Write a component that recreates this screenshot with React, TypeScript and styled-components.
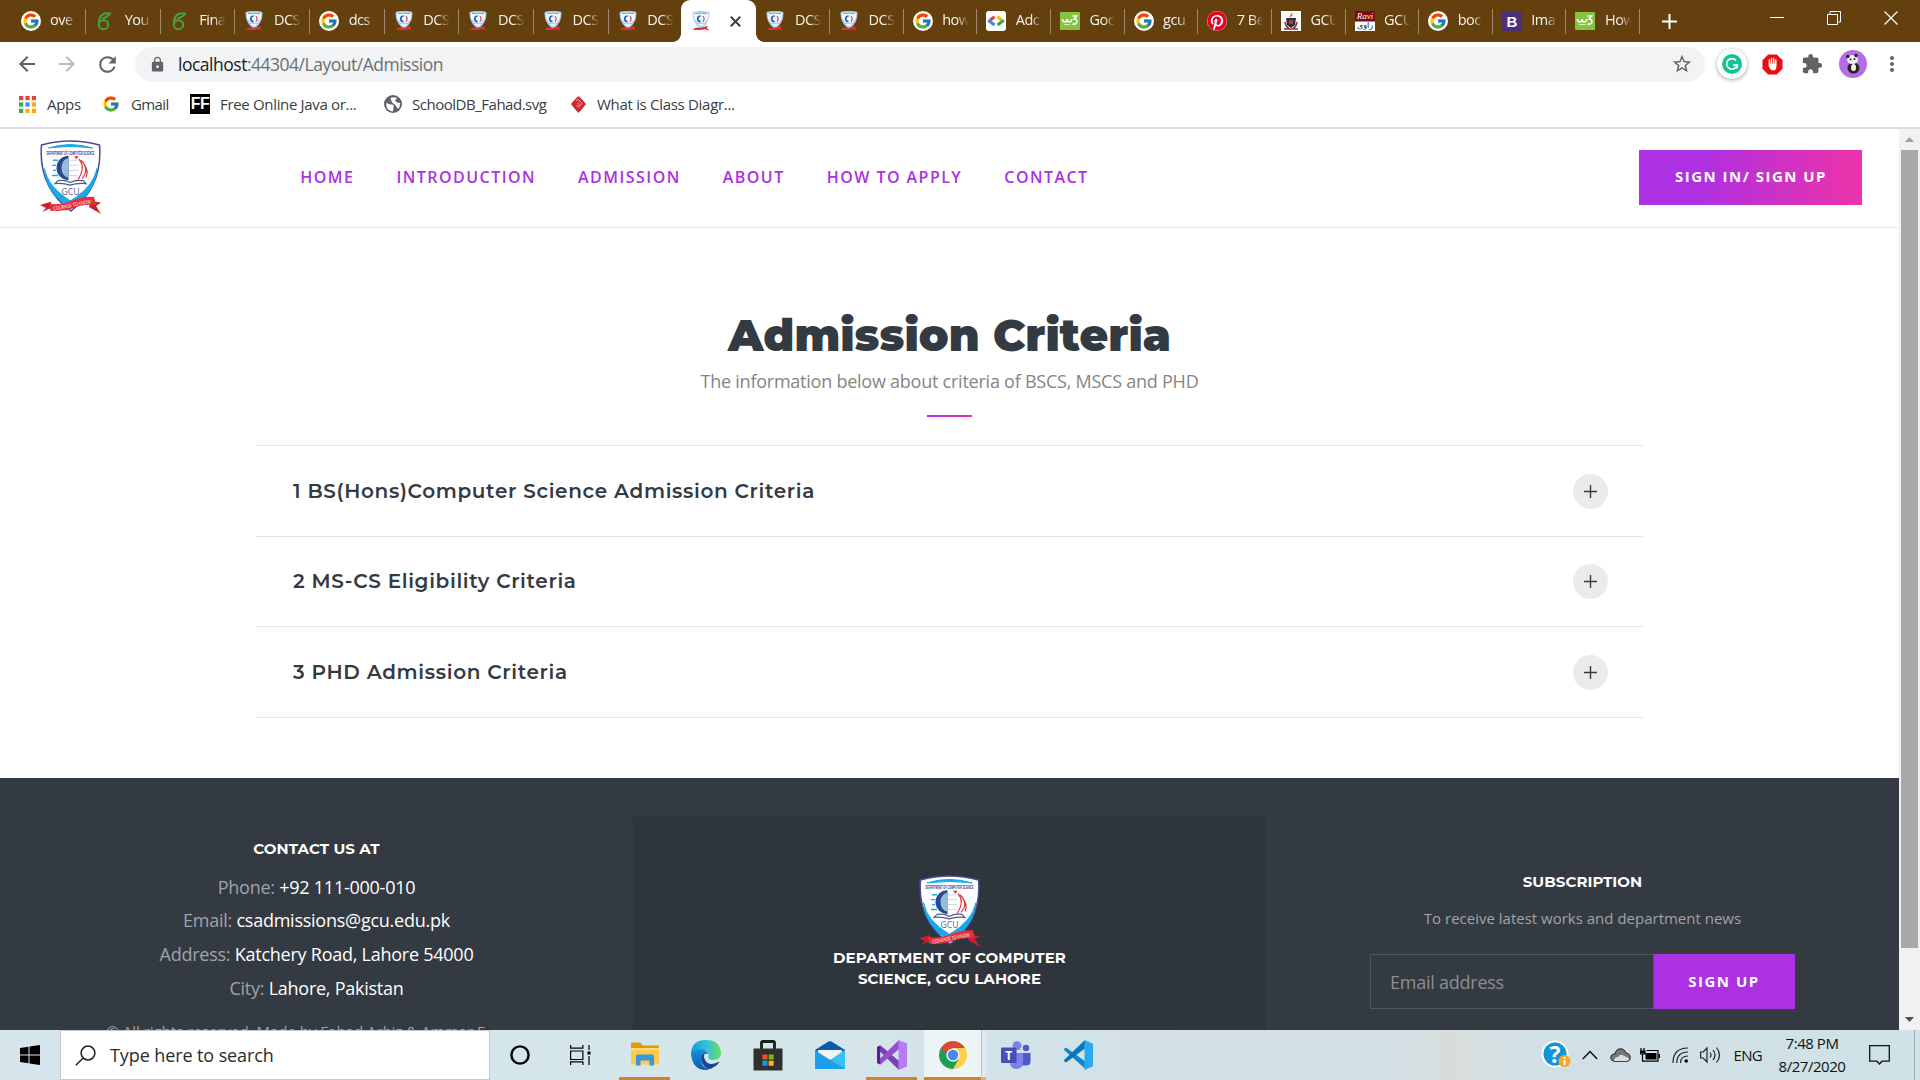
import React from "react";
import styled, { createGlobalStyle, css } from "styled-components";
import { FcGoogle } from "react-icons/fc";
import { FaPinterest } from "react-icons/fa";
import {
  MdArrowBack,
  MdArrowForward,
  MdExtension,
  MdLock,
  MdMoreVert,
  MdRefresh,
  MdStarBorder,
} from "react-icons/md";

const body = `"Open Sans", "Noto Sans", sans-serif`;
const display = `Montserrat, Inter, sans-serif`;

const GlobalStyle = createGlobalStyle`
  * { box-sizing: border-box; }
  body { margin: 0; overflow: hidden; background: #fff; font-family: ${body}; }
  svg { display: block; flex: none; }
  h1, h2, p { margin: 0; }
`;

const Screen = styled.div`
  width: 1920px;
  height: 1080px;
  display: flex;
  flex-direction: column;
  overflow: hidden;
`;

/* ---------- browser chrome ---------- */

const TabStrip = styled.div`
  flex: none;
  height: 42px;
  padding-left: 11.5px;
  display: flex;
  background: #64400f;
`;

const TabItem = styled.div<{ $w: number; $divider: boolean }>`
  width: ${(p) => p.$w}px;
  flex: none;
  height: 42px;
  display: flex;
  align-items: center;
  padding-left: 9px;
  background: linear-gradient(#a08a6b, #a08a6b) right 9px / 1px 25px no-repeat;
  ${(p) => !p.$divider && css`background: none;`}
`;

const ActiveTab = styled.div`
  width: 75.5px;
  flex: none;
  height: 42px;
  margin-left: -2.5px;
  display: flex;
  align-items: center;
  justify-content: space-between;
  padding: 0 15px 0 10px;
  position: relative;
  background: #fff;
  border-radius: 9px 9px 0 0;
  &::before,
  &::after {
    content: "";
    position: absolute;
    bottom: 0;
    width: 8px;
    height: 8px;
  }
  &::before {
    left: -8px;
    background: radial-gradient(circle at 0 0, transparent 7.5px, #fff 8px);
  }
  &::after {
    right: -8px;
    background: radial-gradient(circle at 100% 0, transparent 7.5px, #fff 8px);
  }
`;

const Favicon = styled.span`
  width: 20px;
  height: 20px;
  flex: none;
  display: flex;
  align-items: center;
  justify-content: center;
`;

const TabTitle = styled.span`
  width: 27px;
  margin: 0 0 2px 9.5px;
  overflow: hidden;
  white-space: nowrap;
  font-size: 14.5px;
  line-height: 22px;
  letter-spacing: -0.5px;
  color: #f8f2ea;
  mask-image: linear-gradient(90deg, #000 55%, transparent 98%);
`;

const WhiteDisc = styled.span`
  width: 20px;
  height: 20px;
  border-radius: 50%;
  background: #fff;
  display: flex;
  align-items: center;
  justify-content: center;
`;

const NewTab = styled.div`
  width: 58px;
  display: flex;
  align-items: center;
  justify-content: center;
`;

const WindowButtons = styled.div`
  margin-left: auto;
  margin-right: 1px;
  height: 36px;
  display: flex;
  align-items: center;
`;

const WindowButton = styled.div`
  width: 57px;
  display: flex;
  justify-content: center;
`;

const Toolbar = styled.div`
  flex: none;
  height: 45px;
  display: flex;
  align-items: center;
  padding: 0 0 1px 15px;
  color: #5f6368;
`;

const NavButtons = styled.div`
  width: 120px;
  display: flex;
  gap: 16px;
`;

const AddressBar = styled.div`
  width: 1570px;
  height: 35px;
  border-radius: 18px;
  background: #f1f3f4;
  display: flex;
  align-items: center;
  padding: 0 12px 0 14px;
`;

const Url = styled.span`
  flex: 1;
  margin-left: 12px;
  font-size: 17.5px;
  letter-spacing: -0.49px;
  line-height: 24px;
  color: #6b6f73;
  b {
    font-weight: 400;
    color: #202124;
  }
`;

const Extensions = styled.div`
  flex: 1;
  display: flex;
  align-items: center;
  padding-left: 12px;
`;

const GrammarlyDisc = styled.span`
  width: 30px;
  height: 30px;
  border-radius: 50%;
  background: #fff;
  box-shadow: 0 1px 4px rgba(0, 0, 0, 0.35);
  display: flex;
  align-items: center;
  justify-content: center;
  margin-right: 15px;
`;

const Slot = styled.span<{ $w: number }>`
  width: ${(p) => p.$w}px;
  display: flex;
  justify-content: center;
`;

const Bookmarks = styled.div`
  flex: none;
  height: 42px;
  border-bottom: 2px solid #dadce0;
  padding: 0 0 7px 19px;
  display: flex;
  align-items: center;
`;

const Bookmark = styled.div<{ $gap: number; $w: number; $ls?: number }>`
  width: ${(p) => p.$w}px;
  display: flex;
  align-items: center;
  gap: ${(p) => p.$gap}px;
  white-space: nowrap;
  font-size: 15px;
  letter-spacing: ${(p) => p.$ls ?? -0.4}px;
  line-height: 20px;
  color: #3a3d41;
  svg {
    margin-top: 1px;
  }
`;

const FFBadge = styled.span`
  width: 20px;
  height: 20px;
  background: #000;
  color: #fff;
  font: 700 16px/20px "Liberation Sans", sans-serif;
  letter-spacing: -0.6px;
  text-align: center;
`;

/* ---------- page ---------- */

const Viewport = styled.div`
  height: 901px;
  flex: none;
  display: flex;
  overflow: hidden;
`;

const Page = styled.main`
  width: 1899px;
  overflow: hidden;
`;

const Scrollbar = styled.div`
  width: 21px;
  background: #f1f1f1;
  display: flex;
  flex-direction: column;
  align-items: center;
  padding-right: 1px;
`;

const ScrollArrow = styled.div`
  height: 21px;
  display: flex;
  align-items: center;
`;

const ScrollThumb = styled.div`
  width: 17px;
  height: 798px;
  margin-bottom: 61px;
  background: #a8a8a8;
`;

const Header = styled.header`
  height: 99px;
  border-bottom: 1px solid #e5e5e5;
  display: flex;
  align-items: center;
  padding: 0 37px 2px 40px;
`;

const HeaderNav = styled.nav`
  flex: 1;
  display: flex;
  gap: 42px;
  margin-left: 199.3px;
`;

const NavLink = styled.a`
  font-size: 16px;
  font-weight: 600;
  letter-spacing: 1.46px;
  line-height: 24px;
  color: #ad30e3;
`;

const SignIn = styled.button`
  width: 223px;
  height: 55px;
  border: 0;
  padding: 0 0 2px 1px;
  background: linear-gradient(90deg, #ad30e3 25%, #e932ab 95%);
  color: #fff;
  font: 700 15px ${body};
  letter-spacing: 1.48px;
`;

const Intro = styled.section`
  height: 217px;
  display: flex;
  flex-direction: column;
  align-items: center;
  padding-top: 80px;
`;

const Title = styled.h1`
  font: 900 44px/54px ${display};
  letter-spacing: 0.05px;
  color: #343a42;
`;

const Lead = styled.p`
  margin-top: 5px;
  font-size: 18px;
  line-height: 28px;
  letter-spacing: -0.24px;
  color: #858585;
`;

const Accent = styled.div`
  width: 45px;
  height: 2px;
  margin-top: 20px;
  background: linear-gradient(90deg, #ad30e3, #e932ab);
`;

const Accordion = styled.section`
  width: 1387px;
  margin-left: 256px;
  border-top: 1px solid #e5e5e5;
`;

const AccordionRow = styled.div`
  height: 90.7px;
  border-bottom: 1px solid #e5e5e5;
  display: flex;
  align-items: center;
  justify-content: space-between;
  padding: 0.5px 35px 0 37px;
`;

const AccordionTitle = styled.h2`
  margin-bottom: 0.8px;
  font: 600 20px/28px ${display};
  letter-spacing: 0.66px;
  color: #343a42;
`;

const PlusDisc = styled.span`
  width: 35px;
  height: 35px;
  border-radius: 50%;
  background: #ebebeb;
  display: flex;
  align-items: center;
  justify-content: center;
`;

const Footer = styled.footer`
  height: 260px;
  margin-top: 60px;
  padding-top: 39px;
  background: #343a42;
  display: grid;
  grid-template-columns: repeat(3, 633px);
`;

const FooterColumn = styled.div<{ $top: number; $dark?: boolean }>`
  height: 330px;
  padding-top: ${(p) => p.$top}px;
  background: ${(p) => (p.$dark ? "#2f353c" : "transparent")};
  display: flex;
  flex-direction: column;
  align-items: center;
`;

const FooterHeading = styled.h2`
  font: 700 15px/21px ${display};
  letter-spacing: 0.08px;
  color: #fff;
  text-align: center;
`;

const ContactList = styled.div`
  margin-top: 11.5px;
`;

const ContactLine = styled.p`
  font-size: 18px;
  line-height: 33.75px;
  letter-spacing: -0.25px;
  text-align: center;
  color: #a0a3a7;
  span {
    color: #fff;
  }
`;

const Copyright = styled.p`
  margin: 13px 42px 0 0;
  font-size: 15px;
  line-height: 24px;
  color: #a0a3a7;
  white-space: nowrap;
`;

const Note = styled.p`
  margin: 14px 0 24px;
  font-size: 15px;
  line-height: 24px;
  color: #a0a3a7;
`;

const SubscribeForm = styled.div`
  display: flex;
  height: 55px;
`;

const EmailField = styled.div`
  width: 284px;
  border: 1px solid #50565d;
  padding: 1px 0 0 19px;
  font-size: 18px;
  line-height: 53px;
  letter-spacing: -0.24px;
  color: #8b8e91;
`;

const SubscribeButton = styled.button`
  width: 141px;
  border: 0;
  padding: 0 1px 2px 0;
  background: #ad30e3;
  color: #fff;
  font: 700 15px ${body};
  letter-spacing: 1.5px;
`;

/* ---------- taskbar ---------- */

const Taskbar = styled.div`
  flex: none;
  height: 50px;
  display: flex;
  background: linear-gradient(
    90deg,
    #d6e5ec 0,
    #d5e7ea 700px,
    #d3e0e8 1160px,
    #d3dfe6 1390px,
    #d7dddb 1450px,
    #d2e0e6 1520px,
    #cfe2e7 1920px
  );
`;

const StartButton = styled.div`
  width: 60px;
  display: flex;
  align-items: center;
  justify-content: center;
`;

const SearchBox = styled.div`
  width: 430px;
  height: 50px;
  background: #fff;
  border: 1px solid #c6c9cb;
  display: flex;
  align-items: center;
  padding-left: 14px;
  gap: 14px;
  font-size: 18px;
  letter-spacing: -0.1px;
  color: #2b2b2b;
`;

const TaskButton = styled.div<{ $w: number; $running?: boolean; $active?: boolean }>`
  width: ${(p) => p.$w}px;
  height: 50px;
  display: flex;
  align-items: center;
  justify-content: center;
  background: ${(p) => (p.$active ? "#edf4f6" : "transparent")};
  border-bottom: 3px solid ${(p) => (p.$running || p.$active ? "#cb862d" : "transparent")};
  border-top: 3px solid transparent;
`;

const ActiveEdge = styled.div`
  width: 5px;
  height: 50px;
  background: #deeaed;
  border-left: 1px solid #b5c4ca;
  border-bottom: 3px solid #dfae73;
`;

const Spacer = styled.div<{ $w: number }>`
  width: ${(p) => p.$w}px;
`;

const Tray = styled.div`
  margin-left: auto;
  display: flex;
  align-items: center;
`;

const TrayText = styled.span`
  width: 34px;
  text-align: right;
  font-size: 15px;
  letter-spacing: -0.7px;
  color: #111;
`;

const Clock = styled.div`
  width: 100px;
  text-align: center;
  font-size: 15px;
  line-height: 23px;
  letter-spacing: -0.45px;
  color: #111;
`;

const ShowDesktop = styled.div`
  width: 6px;
  height: 50px;
  border-left: 1px solid #9fb0b8;
`;

/* ---------- drawings ---------- */

const Crest = ({ w, h }: { w: number; h: number }) => (
  <svg width={w} height={h} viewBox="0 0 61 73" preserveAspectRatio="none">
    <path d="M1.500 5Q30-3 59.500 5Q63 46 31 70Q-2 46 1.500 5Z" fill="#fff" stroke="#4b4a98" strokeWidth="1.500" />
    <path d="M8 8Q30 1 53 8Q30 5 8 8Z" fill="#18a9e8" stroke="#18a9e8" />
    <path d="M4.500 28Q8 47 30.500 60Q53 47 57 28Q55 52 31 67Q6 52 4.500 28Z" fill="#18a9e8" stroke="#18a9e8" strokeWidth="1" />
    <text x="30.5" y="14.500" textAnchor="middle" textLength="48" lengthAdjust="spacingAndGlyphs" fontSize="5.500" fontWeight="700" fontFamily="Liberation Sans, sans-serif" fill="#3e3c8c">
      DEPARTMENT OF COMPUTER SCIENCE
    </text>
    <path d="M28.500 15.500A12 12 0 0 0 28.500 39.500Z" fill="#27498f" />
    <path d="M28.500 18A7 9.500 0 0 0 28.500 37Z" fill="#9bb9d8" />
    <path d="M29 20h8M29 25h9M29 30h9M29 35h8" stroke="#c8dbea" strokeWidth="1" fill="none" />
    <path d="M13 20h5M12 25h4M13 30h3M12 35h6" stroke="#22a7e5" strokeWidth="1.400" />
    <path d="M34 16h4.500l-2 3Z" fill="#e22c36" />
    <path d="M39 19Q46 27 38 39M41 20Q50 29 42 38M44 24Q49 30 46 37" stroke="#e3343d" strokeWidth="1.200" fill="none" />
    <path d="M15 43l3-3q8-1 12 2q6-3 13-2l3 3q-9-1-16 1.500q-7-2.500-15-1.500Z" fill="#fff" stroke="#4a5b92" strokeWidth="1.200" />
    <text x="30.5" y="54" textAnchor="middle" fontSize="9" textLength="18" lengthAdjust="spacingAndGlyphs" fontFamily="Open Sans, sans-serif" fill="#5b5c80">
      GCU
    </text>
    <path d="M0 64l11-3v6l-9 4 4-4ZM51 60l10 2-5 3 5 8-12-7Z" fill="#c9202b" />
    <path d="M9 62.500q8 2.500 20-1.500q13-5.500 25-5l2 8q-13-1-22 3q-12 4.500-24 2.500Z" fill="#e62f39" />
    <text x="32" y="66" transform="rotate(-11 32 64)" textAnchor="middle" fontSize="5.200" fontFamily="Open Sans, sans-serif" fill="#fff" textLength="38" lengthAdjust="spacingAndGlyphs">
      COURAGE TO KNOW
    </text>
  </svg>
);

const CrestIcon = () => (
  <svg width="20" height="20" viewBox="0 0 20 20">
    <path d="M2 1.300Q10-.6 18 1.300Q18.500 12 10 17.500Q1.500 12 2 1.300Z" fill="#eef7fd" stroke="#a9c8e8" strokeWidth="1" />
    <path d="M4 2.500q6-1 12 0" stroke="#35a8e0" fill="none" />
    <path d="M9.500 5a2.800 2.800 0 1 0 0 5.600" fill="none" stroke="#2b5ca6" strokeWidth="1.700" />
    <path d="M12 5q2.200 2.800 0 5.600" stroke="#e2444d" strokeWidth="1.200" fill="none" />
    <path d="M6 12.300h8M4 9q2 5 6 7.300q4-2.300 6-7.300" stroke="#8fd0f0" fill="none" />
    <path d="M1.500 18.500l3.500-2q6 .8 11.500-1.800l-.5 2.500 2.500 2.600-4-1.500q-5 1.500-13 .2Z" fill="#e2303a" />
  </svg>
);

const GoogleIcon = () => (
  <WhiteDisc>
    <FcGoogle size={18} />
  </WhiteDisc>
);

const OverleafIcon = () => (
  <svg width="20" height="20" viewBox="0 0 20 20" fill="none" stroke="#47a141" strokeWidth="2">
    <ellipse cx="8.500" cy="13.700" rx="4.700" ry="4.500" />
    <path d="M3.900 13.500Q3.500 5.500 8.500 3Q11 1.800 15 2.500Q13 6 7.500 7.500" />
  </svg>
);

const DevIcon = () => (
  <svg width="20" height="20" viewBox="0 0 20 20">
    <rect width="20" height="20" rx="3" fill="#fff" />
    <g fill="none" strokeWidth="3">
      <path d="M8.500 5.800L4 9.300" stroke="#ea4335" />
      <path d="M2.200 9.200L8.500 14" stroke="#4285f4" />
      <path d="M11.500 5.800L16 9.300" stroke="#fbbc04" />
      <path d="M17.800 9.200L11.500 14" stroke="#34a853" />
    </g>
  </svg>
);

const W3Icon = () => (
  <svg width="20" height="18" viewBox="0 0 20 18">
    <rect width="20" height="18" rx="1" fill="#86c440" />
    <path d="M2.500 7q0 3 2.300 3t2.300-3q0 3 2.300 3q2 0 2.300-3M12.500 4h4l-2.300 3q2.800 0 2.700 2.800q-.5 3-4.400 2.200" stroke="#fff" strokeWidth="1.600" fill="none" />
    <path d="M4 12.500h6.500" stroke="#d6efb6" strokeWidth="1" />
  </svg>
);

const UniversityIcon = () => (
  <svg width="20" height="20" viewBox="0 0 20 20">
    <rect width="20" height="20" fill="#fff" />
    <path d="M5 7h10l-1 7-4 3-4-3Z" fill="#2c2c52" />
    <path d="M10 1q3 2 .500 4t0 3q-3-2-1-4t.500-3Z" fill="#c26a1e" />
    <path d="M8 9h4v4H8Z" fill="#a9442a" />
    <path d="M4 11q1 5 4 6.500M16 11q-1 5-4 6.500M3 18h14" stroke="#8b3b27" strokeWidth="1.600" fill="none" />
  </svg>
);

const RaviIcon = () => (
  <svg width="20" height="20" viewBox="0 0 20 20">
    <rect width="20" height="20" fill="#fff" />
    <rect width="20" height="10.500" fill="#7c0a10" />
    <text x="10" y="8" textAnchor="middle" fontSize="9" fontStyle="italic" fontFamily="Liberation Serif, serif" fill="#fff">
      Ravi
    </text>
    <text x="10" y="17" textAnchor="middle" fontSize="8" fontFamily="DejaVu Sans, sans-serif" fill="#111">
      راوی
    </text>
  </svg>
);

const BootstrapIcon = () => (
  <svg width="20" height="20" viewBox="0 0 20 20">
    <rect width="20" height="20" rx="3" fill="#4b2f7e" />
    <text x="10" y="15.500" textAnchor="middle" fontSize="15" fontWeight="700" fontFamily="Liberation Sans, sans-serif" fill="#fff">
      B
    </text>
  </svg>
);

const PinterestIcon = () => (
  <WhiteDisc>
    <FaPinterest size={20} color="#e60023" />
  </WhiteDisc>
);

const AppsIcon = () => (
  <svg width="17" height="17" viewBox="0 0 17 17">
    {["#ea4335", "#ea4335", "#ea4335", "#34a853", "#4285f4", "#fbab04", "#34a853", "#fbab04", "#fbab04"].map((c, i) => (
      <rect key={i} x={(i % 3) * 6.4} y={Math.floor(i / 3) * 6.4} width="4.2" height="4.2" fill={c} />
    ))}
  </svg>
);

const GlobeIcon = () => (
  <svg width="18" height="18" viewBox="0 0 18 18">
    <circle cx="9" cy="9" r="9" fill="#5f6368" />
    <path d="M2.500 7.500Q5 10 8 9.500Q10.500 9.500 9.500 12L9 16.500Q4 16 2.300 11.500ZM6.500 3Q10 1.500 13 3L11 5.500 13 7.500 16.300 8Q16 12 14 14L11.500 10 8 7.500Z" fill="#fff" />
  </svg>
);

const DiamondIcon = () => (
  <svg width="15" height="17" viewBox="0 0 16 18">
    <path d="M8 .2Q9 .2 16 8.500Q14 11.500 8 18Q2 11.500 0 8.500Q7 .2 8 .2Z" fill="#cf2531" />
    <path d="M5 5l3-1.500L11.500 8 8 12 5.500 9.500M7 7l2 2.500" stroke="#f3c2c5" strokeWidth=".9" fill="none" />
  </svg>
);

const BlockIcon = () => (
  <svg width="21" height="21" viewBox="0 0 21 21">
    <path d="M6.200.5h8.600l5.700 5.700v8.600l-5.700 5.700H6.200L.5 14.800V6.200Z" fill="#e60f0f" />
    <path d="M7.400 10V6M9.500 9V4.500M11.700 9V4.500M13.800 10V6" stroke="#fff" strokeWidth="1.500" strokeLinecap="round" />
    <path d="M6.700 9.500h7.800v2.500q0 4.500-3.600 4.500Q8.500 16.500 6.700 12Z" fill="#fff" />
  </svg>
);

const GrammarlyIcon = () => (
  <svg width="20" height="20" viewBox="0 0 20 20">
    <circle cx="10" cy="10" r="10" fill="#15c39a" />
    <path d="M14 6.500A5.300 5.300 0 1 0 15 11.500M11 11h4.300v3.500" stroke="#fff" strokeWidth="1.700" fill="none" />
  </svg>
);

const PandaIcon = () => (
  <svg width="28" height="28" viewBox="0 0 28 28">
    <circle cx="14" cy="14" r="14" fill="#b66ce6" />
    <ellipse cx="14.500" cy="18" rx="6" ry="5.500" fill="#262626" />
    <ellipse cx="14.500" cy="17.500" rx="2.500" ry="3.500" fill="#f5f5f5" />
    <ellipse cx="13.500" cy="9.500" rx="5.500" ry="4.500" fill="#f5f5f5" />
    <circle cx="8.800" cy="6.500" r="1.800" fill="#262626" />
    <circle cx="17" cy="5.500" r="1.800" fill="#262626" />
    <circle cx="11.500" cy="9.500" r="1" fill="#262626" />
    <circle cx="15.500" cy="9" r="1" fill="#262626" />
  </svg>
);

const ExplorerIcon = () => (
  <svg width="30" height="30" viewBox="0 0 30 30">
    <path d="M1 4q0-1.500 1.500-1.500H10l3 3h15q1 0 1 1V12H1Z" fill="#dd9b09" />
    <path d="M1 8h28v16.500H1Z" fill="#fdcb4b" />
    <path d="M6 25.500V16q0-1.500 1.500-1.500h15Q24 14.500 24 16v9.500h-4.500v-5h-9v5Z" fill="#3b96dc" />
    <path d="M1 8h28v2H1Z" fill="#ffdc78" />
  </svg>
);

const EdgeIcon = () => (
  <svg width="30" height="30" viewBox="0 0 30 30">
    <defs>
      <linearGradient id="edgeTop" x1="0" x2="1">
        <stop offset="0" stopColor="#1a98de" />
        <stop offset=".55" stopColor="#36c3d6" />
        <stop offset="1" stopColor="#63df57" />
      </linearGradient>
      <linearGradient id="edgeLow" x1="0" y1="0" x2="0" y2="1">
        <stop offset="0" stopColor="#1a8fdb" />
        <stop offset="1" stopColor="#0c5cb3" />
      </linearGradient>
    </defs>
    <path d="M0 13Q1 0 15 0Q29 0 30 13Q30 20 22.500 20Q16.500 20 17.500 16.500Q19.500 11 12 10Q4 9 0 15Z" fill="url(#edgeTop)" />
    <path d="M0 14Q3 8 11 9.500Q17 11 17.500 14Q11 13 10 19Q10 27 18 29.700Q2 32 0 14Z" fill="url(#edgeLow)" />
    <path d="M14 13Q8 16 11 23Q16 32 22 27.500Q27 25 28.500 21.500Q18 27 14 20Q12 16 14 13Z" fill="#104a94" />
  </svg>
);

const StoreIcon = () => (
  <svg width="30" height="31" viewBox="0 0 30 31">
    <path d="M8.500 9V3q0-1.500 1.500-1.500h10Q21.500 1.500 21.500 3v6" fill="none" stroke="#1d1d1d" strokeWidth="2.800" />
    <path d="M.5 8.500h29V30.500h-29Z" fill="#303030" />
    <path d="M9.500 14.500h5v5h-5Z" fill="#f25022" />
    <path d="M15.700 14.500h5v5h-5Z" fill="#7fba00" />
    <path d="M9.500 20.700h5v5h-5Z" fill="#00a4ef" />
    <path d="M15.700 20.700h5v5h-5Z" fill="#ffb900" />
  </svg>
);

const MailIcon = () => (
  <svg width="30" height="28" viewBox="0 0 30 28">
    <path d="M0 9L13.500.6q1.500-.9 3 0L30 9v5H0Z" fill="#0a5aad" />
    <path d="M3 9h24v10H3Z" fill="#f3f3f3" />
    <path d="M0 9l15 10L30 9v18q0 1-1 1H1q-1 0-1-1Z" fill="#35c1f1" />
    <path d="M0 10l30 17.500q-.3.500-1 .500H1q-1 0-1-1Z" fill="#1b9fe6" />
  </svg>
);

const VisualStudioIcon = () => (
  <svg width="30" height="30" viewBox="0 0 30 30">
    <path d="M1 6.500L3.500 5.500 22 21v9L1.500 10Z" fill="#7a3db8" />
    <path d="M1 23.500L3.500 24.500 22 9V0L1.500 20Z" fill="#9250d0" />
    <path d="M0 7l3.200-1.500v19L0 23Z" fill="#52218a" />
    <path d="M21.500 0L30 3.500v23L21.500 30Z" fill="#b57df3" />
  </svg>
);

const ChromeIcon = () => (
  <svg width="28" height="28" viewBox="0 0 28 28">
    <circle cx="14" cy="14" r="14" fill="#fcd04b" />
    <path d="M1.900 7A14 14 0 0 1 26.100 7H14L8 17.500Z" fill="#d9493b" />
    <path d="M1.900 7A14 14 0 0 0 14 28l6-10.500-6 3Z" fill="#1a9f58" />
    <circle cx="14" cy="14" r="6.600" fill="#f3f6f7" />
    <circle cx="14" cy="14" r="5.200" fill="#4a86ee" />
  </svg>
);

const TeamsIcon = () => (
  <svg width="30" height="28" viewBox="0 0 30 28">
    <circle cx="25" cy="7" r="3.200" fill="#5059c9" />
    <path d="M20 12h9.500v8q0 4.500-4.500 4.500h-5Z" fill="#5059c9" />
    <circle cx="16" cy="4.700" r="4.500" fill="#7b83eb" />
    <path d="M9 12h13v9q0 7-6.500 7T9 21Z" fill="#7b83eb" />
    <rect y="6.500" width="15.500" height="15.500" rx="1.300" fill="#464eb8" />
    <text x="7.700" y="18.800" textAnchor="middle" fontSize="12" fontWeight="700" fontFamily="Open Sans, sans-serif" fill="#fff">
      T
    </text>
  </svg>
);

const CodeIcon = () => (
  <svg width="30" height="30" viewBox="0 0 30 30">
    <path d="M.5 9.500L3 7.500 23 22v7.500Z" fill="#0f87cf" />
    <path d="M.5 20.500L22 0v8.500L3 22.500Z" fill="#0a76bb" />
    <path d="M21.500 0L30 3.800v22.400L21.500 30Z" fill="#2aa9f1" />
  </svg>
);

const HelpIcon = () => (
  <svg width="30" height="34" viewBox="0 0 30 34">
    <circle cx="14" cy="16" r="13.500" fill="#fff" />
    <circle cx="14" cy="16" r="11.500" fill="#1393d8" />
    <text x="14" y="24.500" textAnchor="middle" fontSize="23" fontWeight="700" fontFamily="Open Sans, sans-serif" fill="#fff">
      ?
    </text>
    <circle cx="23.500" cy="23" r="6" fill="#f4ab1d" />
    <path d="M23.500 19v1.800M23.500 22v5" stroke="#fff" strokeWidth="1.800" />
  </svg>
);

const tabsLeft: [React.ReactNode, string][] = [
  [<GoogleIcon />, "ove"],
  [<OverleafIcon />, "You"],
  [<OverleafIcon />, "Fina"],
  [<CrestIcon />, "DCS"],
  [<GoogleIcon />, "dcs"],
  [<CrestIcon />, "DCS"],
  [<CrestIcon />, "DCS"],
  [<CrestIcon />, "DCS"],
  [<CrestIcon />, "DCS"],
];

const tabsRight: [React.ReactNode, string][] = [
  [<CrestIcon />, "DCS"],
  [<CrestIcon />, "DCS"],
  [<GoogleIcon />, "how"],
  [<DevIcon />, "Adc"],
  [<W3Icon />, "Goc"],
  [<GoogleIcon />, "gcu"],
  [<PinterestIcon />, "7 Be"],
  [<UniversityIcon />, "GCU"],
  [<RaviIcon />, "GCU"],
  [<GoogleIcon />, "boc"],
  [<BootstrapIcon />, "Ima"],
  [<W3Icon />, "How"],
];

const Tabs = ({ items, width, lastDivider }: { items: [React.ReactNode, string][]; width: number; lastDivider: boolean }) => (
  <>
    {items.map(([icon, title], i) => (
      <TabItem key={i} $w={width} $divider={lastDivider || i < items.length - 1}>
        <Favicon>{icon}</Favicon>
        <TabTitle>{title}</TabTitle>
      </TabItem>
    ))}
  </>
);

const links = ["HOME", "INTRODUCTION", "ADMISSION", "ABOUT", "HOW TO APPLY", "CONTACT"];

const criteria = [
  "1 BS(Hons)Computer Science Admission Criteria",
  "2 MS-CS Eligibility Criteria",
  "3 PHD Admission Criteria",
];

const contacts = [
  ["Phone:", "+92 111-000-010"],
  ["Email:", "csadmissions@gcu.edu.pk"],
  ["Address:", "Katchery Road, Lahore 54000"],
  ["City:", "Lahore, Pakistan"],
];

export default function App() {
  return (
    <Screen>
      <GlobalStyle />
      <TabStrip>
        <Tabs items={tabsLeft} width={74.67} lastDivider={false} />
        <ActiveTab>
          <CrestIcon />
          <svg width="11" height="11" viewBox="0 0 11 11" stroke="#3c4043" strokeWidth="2">
            <path d="M.8.8l9.400 9.400M10.200.8L.8 10.200" />
          </svg>
        </ActiveTab>
        <Tabs items={tabsRight} width={73.65} lastDivider />
        <NewTab>
          <svg width="15" height="15" viewBox="0 0 15 15" stroke="#fff" strokeWidth="2">
            <path d="M7.500 0v15M0 7.500h15" />
          </svg>
        </NewTab>
        <WindowButtons>
          <WindowButton>
            <svg width="14" height="13" viewBox="0 0 14 13" stroke="#fff">
              <path d="M0 5.500h14" />
            </svg>
          </WindowButton>
          <WindowButton>
            <svg width="14" height="14" viewBox="0 0 14 14" stroke="#fff" fill="none">
              <path d="M.5 3.500h10v10H.5ZM3 3.500V.5h10.500v10.500h-3" />
            </svg>
          </WindowButton>
          <WindowButton>
            <svg width="14" height="14" viewBox="0 0 14 14" stroke="#fff" strokeWidth="1.2">
              <path d="M.5.5l13 13M13.500.5l-13 13" />
            </svg>
          </WindowButton>
        </WindowButtons>
      </TabStrip>

      <Toolbar>
        <NavButtons>
          <MdArrowBack size={24} />
          <MdArrowForward size={24} color="#b9bbbe" />
          <MdRefresh size={25} />
        </NavButtons>
        <AddressBar>
          <MdLock size={17} />
          <Url>
            <b>localhost</b>:44304/Layout/Admission
          </Url>
          <MdStarBorder size={22} />
        </AddressBar>
        <Extensions>
          <GrammarlyDisc>
            <GrammarlyIcon />
          </GrammarlyDisc>
          <Slot $w={20}>
            <BlockIcon />
          </Slot>
          <Slot $w={60}>
            <MdExtension size={22} />
          </Slot>
          <Slot $w={22}>
            <PandaIcon />
          </Slot>
          <Slot $w={56}>
            <MdMoreVert size={24} />
          </Slot>
        </Extensions>
      </Toolbar>

      <Bookmarks>
        <Bookmark $gap={11} $w={83} $ls={-0.3}>
          <AppsIcon />
          Apps
        </Bookmark>
        <Bookmark $gap={11} $w={88} $ls={-0.6}>
          <FcGoogle size={18} />
          Gmail
        </Bookmark>
        <Bookmark $gap={10} $w={194} $ls={-0.33}>
          <FFBadge>FF</FFBadge>
          Free Online Java or...
        </Bookmark>
        <Bookmark $gap={10} $w={187} $ls={-0.48}>
          <GlobeIcon />
          SchoolDB_Fahad.svg
        </Bookmark>
        <Bookmark $gap={11} $w={170} $ls={-0.3}>
          <DiamondIcon />
          What is Class Diagr...
        </Bookmark>
      </Bookmarks>

      <Viewport>
        <Page>
          <Header>
            <Crest w={61} h={74} />
            <HeaderNav>
              {links.map((l) => (
                <NavLink key={l}>{l}</NavLink>
              ))}
            </HeaderNav>
            <SignIn>SIGN IN/ SIGN UP</SignIn>
          </Header>
          <Intro>
            <Title>Admission Criteria</Title>
            <Lead>The information below about criteria of BSCS, MSCS and PHD</Lead>
            <Accent />
          </Intro>
          <Accordion>
            {criteria.map((title) => (
              <AccordionRow key={title}>
                <AccordionTitle>{title}</AccordionTitle>
                <PlusDisc>
                  <svg width="13" height="13" viewBox="0 0 13 13" stroke="#343a42" strokeWidth="1.4">
                    <path d="M6.500 0v13M0 6.500h13" />
                  </svg>
                </PlusDisc>
              </AccordionRow>
            ))}
          </Accordion>
          <Footer>
            <FooterColumn $top={21}>
              <FooterHeading>CONTACT US AT</FooterHeading>
              <ContactList>
                {contacts.map(([label, value]) => (
                  <ContactLine key={label}>
                    {label} <span>{value}</span>
                  </ContactLine>
                ))}
              </ContactList>
              <Copyright>© All rights reserved. Made by Fahad Arbiz &amp; Ammar F</Copyright>
            </FooterColumn>
            <FooterColumn $top={58} $dark>
              <Crest w={61} h={72} />
              <FooterHeading>
                DEPARTMENT OF COMPUTER
                <br />
                SCIENCE, GCU LAHORE
              </FooterHeading>
            </FooterColumn>
            <FooterColumn $top={54}>
              <FooterHeading>SUBSCRIPTION</FooterHeading>
              <Note>To receive latest works and department news</Note>
              <SubscribeForm>
                <EmailField>Email address</EmailField>
                <SubscribeButton>SIGN UP</SubscribeButton>
              </SubscribeForm>
            </FooterColumn>
          </Footer>
        </Page>
        <Scrollbar>
          <ScrollArrow>
            <svg width="9" height="5" viewBox="0 0 9 5">
              <path d="M0 5L4.500 0 9 5Z" fill="#a0a0a0" />
            </svg>
          </ScrollArrow>
          <ScrollThumb />
          <ScrollArrow>
            <svg width="9" height="5" viewBox="0 0 9 5">
              <path d="M0 0h9L4.500 5Z" fill="#505050" />
            </svg>
          </ScrollArrow>
        </Scrollbar>
      </Viewport>

      <Taskbar>
        <StartButton>
          <svg width="20" height="20" viewBox="0 0 20 20">
            <path d="M0 3l8.500-1.200v7.700H0ZM9.500 1.600L20 0v9.500H9.500ZM0 10.500h8.500v7.700L0 17ZM9.500 10.500H20V20L9.500 18.400Z" />
          </svg>
        </StartButton>
        <SearchBox>
          <svg width="21" height="21" viewBox="0 0 21 21" fill="none" stroke="#222" strokeWidth="1.5">
            <circle cx="13" cy="8" r="6.9" />
            <path d="M8.200 13L.8 20.300" />
          </svg>
          Type here to search
        </SearchBox>
        <TaskButton $w={60}>
          <svg width="20" height="20" viewBox="0 0 20 20" fill="none" stroke="#000" strokeWidth="2.4">
            <circle cx="10" cy="10" r="8.6" />
          </svg>
        </TaskButton>
        <TaskButton $w={60}>
          <svg width="21" height="20" viewBox="0 0 21 20" fill="none" stroke="#000" strokeWidth="1.2">
            <path d="M.6 0v3.200h12.300V0M.6 6h12.300v8.500H.6ZM.6 20v-3.200h12.300V20M19 0v5M19 11v9" />
            <path d="M17.500 6.500h3v3h-3Z" fill="#000" stroke="none" />
          </svg>
        </TaskButton>
        <Spacer $w={9} />
        <TaskButton $w={51} $running>
          <ExplorerIcon />
        </TaskButton>
        <Spacer $w={10} />
        <TaskButton $w={52}>
          <EdgeIcon />
        </TaskButton>
        <Spacer $w={10} />
        <TaskButton $w={51}>
          <StoreIcon />
        </TaskButton>
        <Spacer $w={11} />
        <TaskButton $w={51}>
          <MailIcon />
        </TaskButton>
        <Spacer $w={11} />
        <TaskButton $w={51} $running>
          <VisualStudioIcon />
        </TaskButton>
        <Spacer $w={7} />
        <TaskButton $w={57} $active>
          <ChromeIcon />
        </TaskButton>
        <ActiveEdge />
        <Spacer $w={4} />
        <TaskButton $w={52}>
          <TeamsIcon />
        </TaskButton>
        <Spacer $w={10} />
        <TaskButton $w={52}>
          <CodeIcon />
        </TaskButton>
        <Tray>
          <HelpIcon />
          <Slot $w={38}>
            <svg width="16" height="10" viewBox="0 0 16 10" fill="none" stroke="#111" strokeWidth="1.5">
              <path d="M.8 9L8 1.500 15.200 9" />
            </svg>
          </Slot>
          <Slot $w={22}>
            <svg width="21" height="14" viewBox="0 0 21 14">
              <path d="M5 13.300Q.8 13 .8 9.500T5 6Q6 .8 10.500.8q4 0 5.300 4.200Q20.200 5.500 20.200 9.500T16 13.300Z" fill="#777" stroke="#222" />
              <path d="M4 13Q4 9 8 9q2-3.500 5.500-1.500T19 10q0 3-3 3Z" fill="#ddd" />
            </svg>
          </Slot>
          <Slot $w={38}>
            <svg width="20" height="14" viewBox="0 0 20 14">
              <path d="M1 0v3M4 0v3M0 3h5v3H0ZM2.500 6v7.200h15.500V2.500H6.500" fill="none" stroke="#000" strokeWidth="1.2" />
              <path d="M5.500 5h11v6.500h-11ZM18.500 6H20v4h-1.500ZM0 3h5v2.500H0Z" />
            </svg>
          </Slot>
          <Slot $w={23}>
            <svg width="17" height="16" viewBox="0 0 17 16" fill="none" stroke="#222" strokeWidth="1.2">
              <path d="M1 16Q1 1 16 1M4.800 16Q4.800 5 16 5M8.500 16Q8.500 9 16 9" />
              <circle cx="14.200" cy="14" r="1.8" fill="#000" stroke="none" />
            </svg>
          </Slot>
          <Slot $w={36}>
            <svg width="21" height="18" viewBox="0 0 21 18" fill="none" stroke="#222" strokeWidth="1.2">
              <path d="M.6 6v6h2.600L7 16V2L3.200 6ZM10 6.500q2 2.500 0 5M13 4q4 5 0 10M16.500 1.500q6 7.500 0 15" />
            </svg>
          </Slot>
          <TrayText>ENG</TrayText>
          <Clock>
            7:48 PM
            <br />
            8/27/2020
          </Clock>
          <Slot $w={34}>
            <svg width="21" height="20" viewBox="0 0 21 20" fill="none" stroke="#111" strokeWidth="1.3">
              <path d="M.7.700h19.600v15.500h-7.300l-2.500 2.800-2.500-2.800H.7Z" />
            </svg>
          </Slot>
          <Spacer $w={18} />
          <ShowDesktop />
        </Tray>
      </Taskbar>
    </Screen>
  );
}
